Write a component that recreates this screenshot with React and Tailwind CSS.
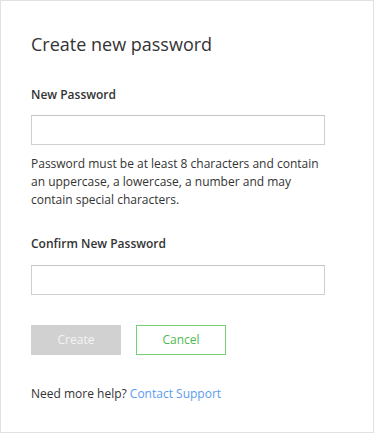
import React from 'react';

export default function App() {
  return (
    <div className="min-h-screen bg-white font-['Open_Sans',sans-serif] text-[#333]">
      <div className="w-[374px] h-[433px] border border-[#e2e2e2] pl-[30px] pr-[48px] pt-[29px]">
        {/* Title */}
        <h1 className="text-[18px] leading-[28px] font-normal text-[#333]">Create new password</h1>

        {/* New password */}
        <label className="block mt-[28px] text-[12px] leading-[18px] font-semibold">New Password</label>
        <input
          type="password"
          className="block mt-[11px] w-[294px] h-[30px] border border-[#cfcfcf] border-t-[#c4c4c4] bg-white outline-none"
        />
        <p className="mt-[10px] text-[12px] leading-[18px] text-[#333]">
          Password must be at least 8 characters and contain an uppercase, a lowercase, a number and may contain special characters.
        </p>

        {/* Confirm password */}
        <label className="block mt-[26px] text-[12px] leading-[18px] font-semibold">Confirm New Password</label>
        <input
          type="password"
          className="block mt-[12px] w-[294px] h-[30px] border border-[#cfcfcf] border-t-[#c4c4c4] bg-white outline-none"
        />

        {/* Actions */}
        <div className="flex gap-[15px] mt-[30px]">
          <button className="w-[90px] h-[30px] bg-[#d1d1d1] text-[#f4f4f4] text-[12px]">Create</button>
          <button className="w-[90px] h-[30px] border border-[#74d274] text-[#4fb84f] text-[12px] bg-white">Cancel</button>
        </div>

        <p className="mt-[30px] text-[12px] leading-[18px]">
          Need more help? <a className="text-[#5a9cf0]">Contact Support</a>
        </p>
      </div>
    </div>
  );
}
